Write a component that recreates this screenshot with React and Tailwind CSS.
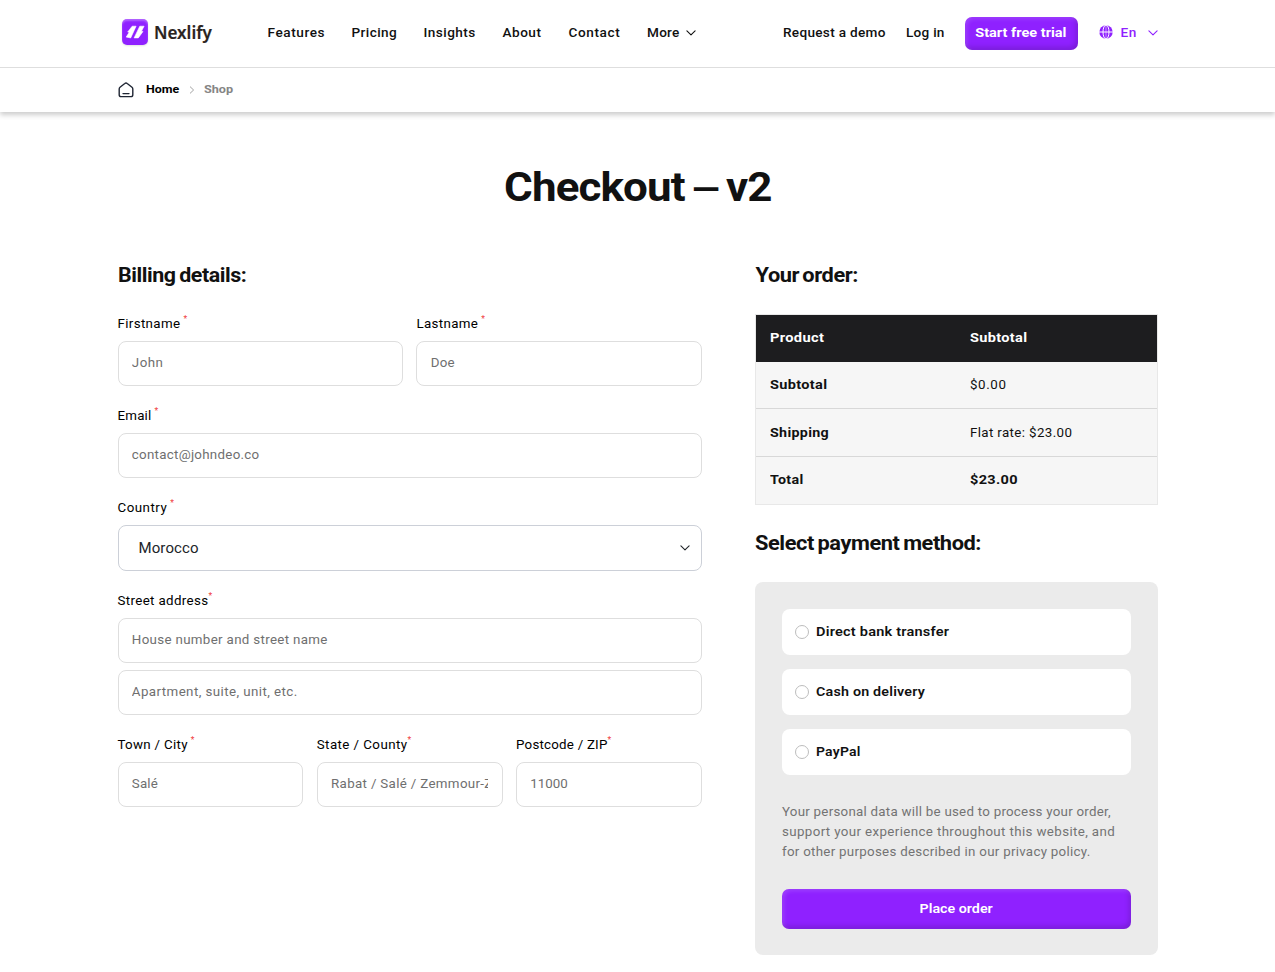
const NAV = [
  ["Features", "w-[84px] tracking-[0.58px]"],
  ["Pricing", "w-[72px] tracking-[0.4px]"],
  ["Insights", "w-[79px] tracking-[0.45px]"],
  ["About", "w-[66px] tracking-[0.5px]"],
  ["Contact", "w-[78.5px] tracking-[0.6px]"],
  ["More", "w-[39px] tracking-[0.25px]"],
];

const inset = "shadow-[inset_-2px_-3px_5px_rgba(0,0,0,0.15),inset_2px_2px_4px_rgba(255,255,255,0.15)]";

function Wide({ scale, className = "origin-left", children }) {
  return <span className={"inline-block whitespace-nowrap " + scale + " " + className}>{children}</span>;
}

function Chevron({ className }) {
  return (
    <svg viewBox="0 0 10 6" fill="none" stroke="currentColor" className={className}>
      <path d="M.9.9 5 4.9 9.1.9" strokeWidth="1.1" strokeLinecap="round" strokeLinejoin="round" />
    </svg>
  );
}

function Logo() {
  return (
    <a className="flex w-[146px] items-center pl-[4.5px]">
      <span className="mb-[2px] flex size-[26px] items-center justify-center rounded-[5px] bg-[#8f21ff] shadow-[inset_0_2px_2px_rgba(255,255,255,0.3),0_1px_2px_rgba(0,0,0,0.12)]">
        <svg viewBox="0 0 26 26" className="size-[26px]" fill="#fff" stroke="#fff" strokeWidth=".6" strokeLinejoin="round">
          <path d="M10.2 7.2h3.9L8.7 18.9l-4.5-.8 3-4.8-1.5-.3z" />
          <path d="M17.8 7.2h4.3l-2.7 5 1.6.3-4.7 6.4h-4.2z" />
        </svg>
      </span>
      <span className="ml-[6px] font-['Noto_Sans'] text-[17px] font-semibold tracking-[0px] text-[#2a2320] [-webkit-text-stroke:0.2px_#2a2320]">Nexlify</span>
    </a>
  );
}

function Header() {
  return (
    <header className="border-b border-[#dedede]">
      <div className="mx-auto flex h-[67px] w-[1040px] items-center pb-[2px] text-[13.6px] font-medium text-[#111]">
        <Logo />
        <nav className="ml-[4px] flex items-center">
          {NAV.map(([name, cls]) => (
            <a key={name} className={"block whitespace-nowrap " + cls}>{name}</a>
          ))}
          <Chevron className="mt-[2px] h-[6px] w-[10px]" />
        </nav>
        <div className="ml-auto flex items-center">
          <a className="w-[123px] whitespace-nowrap tracking-[0.3px]">Request a demo</a>
          <a className="w-[58.5px] whitespace-nowrap tracking-[0.25px]">Log in</a>
          <button className={"mt-[1px] h-[33px] w-[113px] rounded-[7px] bg-[#8f21ff] text-[13.33px] font-bold text-white " + inset}>
            <Wide scale="scale-x-[1.09]" className="origin-center pb-[1px]">Start free trial</Wide>
          </button>
          <div className="ml-[21px] flex items-center text-[#8f21ff]">
            <svg viewBox="0 0 14 14" className="size-[14px]" fill="none">
              <circle cx="7" cy="7" r="6.7" fill="currentColor" />
              <path d="M0 7h14" stroke="#fff" strokeWidth="1" />
              <path d="M7 0v14" stroke="#fff" strokeWidth=".5" />
              <ellipse cx="7" cy="7" rx="3" ry="7" stroke="#fff" strokeWidth="1" />
            </svg>
            <span className="ml-[8px] w-[27px] tracking-[0.5px]">En</span>
            <Chevron className="mt-[1px] h-[6px] w-[10px]" />
          </div>
        </div>
      </div>
    </header>
  );
}

function Breadcrumb() {
  return (
    <div className="shadow-[0_3px_5px_rgba(0,0,0,0.2)] [clip-path:inset(0_0_-12px_0)]">
      <div className="mx-auto flex h-[44px] w-[1040px] items-center pb-[1px] text-[11.5px] font-bold">
        <svg viewBox="0 0 16 16" className="size-[16px]" fill="none" stroke="#1f2533" strokeWidth="1.4" strokeLinecap="round" strokeLinejoin="round">
          <path d="M1.2 6.9c0-.7.3-1.2.8-1.6L6.8 1.5c.7-.6 1.7-.6 2.4 0L14 5.3c.5.4.8.9.8 1.6v5.8c0 1.1-.8 1.9-1.9 1.9H3.1c-1.1 0-1.9-.8-1.9-1.9z" />
          <path d="M5 11.6h6" />
        </svg>
        <span className="ml-[12.5px] w-[43px] text-black"><Wide scale="scale-x-[1.08]">Home</Wide></span>
        <svg viewBox="0 0 6 8" className="h-[8px] w-[6px]" fill="none" stroke="#999"><path d="m1 .6 3.6 3.4L1 7.4" strokeWidth=".9" /></svg>
        <span className="ml-[9px] text-[#858585]"><Wide scale="scale-x-[1.1]">Shop</Wide></span>
      </div>
    </div>
  );
}

function Field({ label, text, tight, children }) {
  return (
    <div className="min-w-0 flex-1">
      <label className="mb-[8px] flex h-[20px] items-center whitespace-nowrap text-black">
        <span className={"pt-[2px] " + text}>{label}</span>
        <span className={"mb-[8px] text-[8.5px] leading-none text-[#f03c3c] " + (tight ? "" : "ml-[3px]")}>*</span>
      </label>
      {children}
    </div>
  );
}

function Input({ placeholder, className = "" }) {
  return (
    <input
      placeholder={placeholder}
      className={"block h-[45px] w-full rounded-[8px] border border-[#dedede] bg-white px-[13.3px] pb-[2px] placeholder:text-[#6f6f6f] " + className}
    />
  );
}

const h2 = "h-[30px] text-[20px] leading-[30px] font-bold tracking-[-0.4px]";

function Billing() {
  return (
    <section className="w-[584.5px]">
      <h2 className={"mb-[23px] " + h2}><Wide scale="scale-x-[1.07]" className="origin-left [word-spacing:-1.2px]">Billing details:</Wide></h2>
      <div className="flex flex-col gap-[19px]">
        <div className="flex gap-[13.3px]">
          <Field label="Firstname" text="tracking-[0.35px]"><Input placeholder="John" className="tracking-[0.5px]" /></Field>
          <Field label="Lastname" text="tracking-[0.35px]"><Input placeholder="Doe" className="tracking-[0.2px]" /></Field>
        </div>
        <Field label="Email" text="tracking-[0.2px]"><Input placeholder="contact@johndeo.co" className="tracking-[0.28px]" /></Field>
        <Field label="Country" text="tracking-[0.5px]">
          <div className="flex h-[46px] items-center justify-between rounded-[8px] border border-[#ccd0d8] pr-[11.5px] pl-[20px] text-[15px] tracking-[0.1px] text-[#212529]">
            <span>Morocco</span>
            <Chevron className="h-[6px] w-[10px]" />
          </div>
        </Field>
        <Field label="Street address" text="tracking-[0.35px]" tight>
          <div className="flex flex-col gap-[7px]">
            <Input placeholder="House number and street name" className="tracking-[0.33px]" />
            <Input placeholder="Apartment, suite, unit, etc." className="tracking-[0.42px]" />
          </div>
        </Field>
        <div className="flex gap-[13.3px]">
          <Field label="Town / City" text="tracking-[0.3px]"><Input placeholder="Salé" className="tracking-[0.2px]" /></Field>
          <Field label="State / County" text="tracking-[0.43px]" tight><Input placeholder="Rabat / Salé / Zemmour-Zaer" className="tracking-[0.33px]" /></Field>
          <Field label="Postcode / ZIP" text="tracking-[0.22px]" tight><Input placeholder="11000" /></Field>
        </div>
      </div>
    </section>
  );
}

const ROWS = [
  ["Subtotal", "$0.00", "h-[47px] border-b", "scale-x-[1.09]", "", "tracking-[0.6px]"],
  ["Shipping", "Flat rate: $23.00", "h-[48px] border-b", "scale-x-[1.07]", "", "tracking-[0.37px]"],
  ["Total", "$23.00", "h-[47px] pb-[2px]", "scale-x-[1.07]", "scale-x-[1.09]", "font-bold tracking-[0.3px]"],
];

const METHODS = [
  ["Direct bank transfer", "scale-x-[1.09]"],
  ["Cash on delivery", "scale-x-[1.07]"],
  ["PayPal", "scale-x-[1.05]"],
];

function Order() {
  return (
    <section className="w-[402.5px]">
      <h2 className={"mb-[24px] " + h2}><Wide scale="scale-x-[1.09]" className="origin-left pl-[0.5px] [word-spacing:-1.6px]">Your order:</Wide></h2>
      <div className="border border-[#e8e8e8] bg-[#f6f6f6]">
        <div className="flex h-[47px] items-center bg-[#1d1d1f] px-[13.5px] pb-[2px] font-bold tracking-[0.3px] text-white">
          <span className="w-[200.5px]"><Wide scale="scale-x-[1.1]">Product</Wide></span>
          <Wide scale="scale-x-[1.09]">Subtotal</Wide>
        </div>
        {ROWS.map(([a, b, row, sa, sb, cb]) => (
          <div key={a} className={"flex items-center border-[#d8d8d8] px-[13.5px] " + row}>
            <span className="w-[200.5px] font-bold tracking-[0.3px]"><Wide scale={sa}>{a}</Wide></span>
            <Wide scale={sb} className={"origin-left " + cb}>{b}</Wide>
          </div>
        ))}
      </div>
      <h2 className={"mt-[23px] mb-[24px] " + h2}><Wide scale="scale-x-[1.09]" className="origin-left [word-spacing:-1.2px]">Select payment method:</Wide></h2>
      <div className="h-[373px] rounded-[8px] bg-[#ebebeb] p-[27px]">
        <div className="flex flex-col gap-[14px]">
          {METHODS.map(([name, scale]) => (
            <label key={name} className="flex h-[46px] items-center rounded-[8px] bg-white pl-[13px] font-semibold tracking-[0.2px]">
              <span className="mr-[6.5px] size-[14px] rounded-full border border-[#bdbdbd]" />
              <Wide scale={scale} className="origin-left pb-[1px]">{name}</Wide>
            </label>
          ))}
        </div>
        <p className="mt-[27px] leading-[20px] whitespace-nowrap text-[#737373]">
          <span className="block tracking-[0.25px]">Your personal data will be used to process your order,</span>
          <span className="block tracking-[0.37px]">support your experience throughout this website, and</span>
          <span className="block tracking-[0.28px]">for other purposes described in our privacy policy.</span>
        </p>
        <button className={"mt-[27px] h-[40px] w-full rounded-[7px] bg-[#8f21ff] pb-[1px] font-semibold text-white " + inset}>
          <Wide scale="scale-x-[1.07]" className="origin-center">Place order</Wide>
        </button>
      </div>
    </section>
  );
}

export default function App() {
  return (
    <div className="h-[972px] overflow-hidden bg-white font-['Roboto',sans-serif] text-[13.33px] text-[#111]">
      <Header />
      <Breadcrumb />
      <main className="mx-auto w-[1040px] pt-[51px]">
        <h1 className="h-[50px] text-center text-[40px] leading-[50px] font-bold tracking-[-0.8px]">
          <Wide scale="scale-x-[1.098]" className="origin-center [word-spacing:-2.5px]">
            Checkout <span className="text-[33px]">—</span> v2
          </Wide>
        </h1>
        <div className="mt-[47px] flex justify-between">
          <Billing />
          <Order />
        </div>
      </main>
    </div>
  );
}
